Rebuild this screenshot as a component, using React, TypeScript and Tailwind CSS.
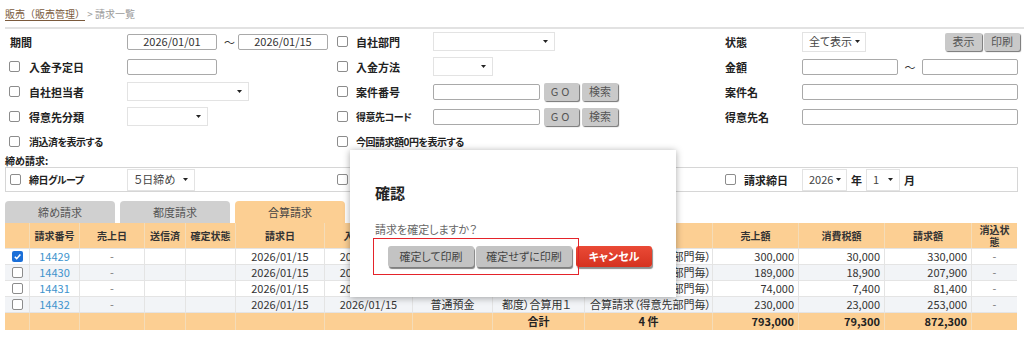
import React from "react";

const rows = [
  { no: "14429", on: true, sales: "300,000", tax: "30,000", total: "330,000" },
  { no: "14430", on: false, sales: "189,000", tax: "18,900", total: "207,900" },
  { no: "14431", on: false, sales: "74,000", tax: "7,400", total: "81,400" },
  { no: "14432", on: false, sales: "230,000", tax: "23,000", total: "253,000" },
];

const grid =
  "grid grid-cols-[25px_50px_65px_41px_50px_89px_88px_80px_92px_128px_86px_86px_87px_45px]";

function Check({ on = false }: { on?: boolean }) {
  if (on) {
    return (
      <span className="flex h-[11px] w-[11px] shrink-0 items-center justify-center rounded-[2px] bg-[#1b6fd8]">
        <svg width="9" height="9" viewBox="0 0 10 10">
          <path d="M2 5.3l2.1 2.1L8.2 2.8" fill="none" stroke="#fff" strokeWidth="1.7" />
        </svg>
      </span>
    );
  }
  return <span className="block h-[11px] w-[11px] shrink-0 rounded-[2px] border border-[#8c8c8c] bg-white" />;
}

function Caret() {
  return (
    <svg width="5" height="3" viewBox="0 0 5 3" className="shrink-0">
      <path d="M0 0h5L2.5 3z" fill="#222" />
    </svg>
  );
}

function Sel({ className, value = "" }: { className: string; value?: string }) {
  return (
    <div className={`flex items-center justify-between gap-[3px] whitespace-nowrap border border-[#e3e3e3] bg-white pl-[6px] pr-[6px] text-[11px] text-[#444] ${className}`}>
      <span>{value}</span>
      <Caret />
    </div>
  );
}

function Input({ className, value = "" }: { className: string; value?: string }) {
  return (
    <div className={`flex h-[16px] items-center justify-center rounded-[2px] border border-[#a9a9a9] bg-white text-[11px] text-[#333] ${className}`}>
      {value}
    </div>
  );
}

function GrayBtn({ className, children }: { className: string; children: React.ReactNode }) {
  return (
    <div className={`flex items-center justify-center rounded-[2px] bg-[#c9c9c9] text-[11px] text-[#555] shadow-[1px_1px_1px_rgba(0,0,0,0.55)] ${className}`}>
      {children}
    </div>
  );
}

function Lbl({ children, small = false }: { children: React.ReactNode; small?: boolean }) {
  return (
    <span className={`whitespace-nowrap font-bold leading-[14px] text-[#222] ${small ? "text-[10px] tracking-[-0.5px]" : "text-[11px]"}`}>
      {children}
    </span>
  );
}

function Tilde() {
  return <span className="text-[11px] leading-[14px] text-[#333]">～</span>;
}

function Cell({ className = "", children }: { className?: string; children?: React.ReactNode }) {
  return (
    <div className={`flex items-center overflow-hidden whitespace-nowrap border-r border-[#e4e4e4] last:border-r-0 ${className}`}>
      {children}
    </div>
  );
}

export default function App() {
  return (
    <div className="relative h-[343px] w-[1024px] overflow-hidden bg-white font-['Noto_Sans_CJK_JP','Noto_Sans',sans-serif] text-[#333] [font-feature-settings:'palt']">
      {/* breadcrumb */}
      <div className="ml-[5px] h-[29px] border-b-2 border-[#e2e2e2] pt-[7px] text-[10px] leading-[14px] [font-feature-settings:normal]">
        <span className="text-[#7b5a3c] underline underline-offset-2">販売（販売管理）</span>
        <span className="text-[#999]"> &gt; 請求一覧</span>
      </div>

      {/* search form */}
      <div className="pl-[5px]">
        <div className="flex h-[25px] items-center">
          <div className="flex w-[332px] items-center">
            <div className="flex w-[122px] items-center pl-[5px]">
              <Lbl>期間</Lbl>
            </div>
            <Input className="w-[90px]" value="2026/01/01" />
            <div className="flex w-[21px] items-center justify-center pl-[4px]">
              <Tilde />
            </div>
            <Input className="w-[90px]" value="2026/01/15" />
          </div>
          <div className="flex w-[388px] items-center">
            <div className="flex w-[96px] items-center gap-[8px]">
              <Check />
              <Lbl>自社部門</Lbl>
            </div>
            <Sel className="h-[19px] w-[122px]" />
          </div>
          <div className="flex flex-1 items-center">
            <div className="flex w-[77px] items-center">
              <Lbl>状態</Lbl>
            </div>
            <Sel className="h-[20px] w-[64px]" value="全て表示" />
            <div className="ml-auto mr-[4px] flex gap-[2px]">
              <GrayBtn className="h-[18px] w-[37px]">表示</GrayBtn>
              <GrayBtn className="h-[18px] w-[36px]">印刷</GrayBtn>
            </div>
          </div>
        </div>

        <div className="flex h-[25px] items-center">
          <div className="flex w-[332px] items-center">
            <div className="flex w-[122px] items-center gap-[9px] pl-[4px]">
              <Check />
              <Lbl>入金予定日</Lbl>
            </div>
            <Input className="w-[90px]" />
          </div>
          <div className="flex w-[388px] items-center">
            <div className="flex w-[96px] items-center gap-[8px]">
              <Check />
              <Lbl>入金方法</Lbl>
            </div>
            <Sel className="h-[19px] w-[60px]" />
          </div>
          <div className="flex flex-1 items-center">
            <div className="flex w-[77px] items-center">
              <Lbl>金額</Lbl>
            </div>
            <Input className="w-[96px]" />
            <div className="flex w-[24px] items-center justify-center">
              <Tilde />
            </div>
            <Input className="w-[96px]" />
          </div>
        </div>

        <div className="flex h-[25px] items-center">
          <div className="flex w-[332px] items-center">
            <div className="flex w-[122px] items-center gap-[9px] pl-[4px]">
              <Check />
              <Lbl>自社担当者</Lbl>
            </div>
            <Sel className="h-[19px] w-[122px]" />
          </div>
          <div className="flex w-[388px] items-center">
            <div className="flex w-[96px] items-center gap-[8px]">
              <Check />
              <Lbl>案件番号</Lbl>
            </div>
            <Input className="w-[107px]" />
            <GrayBtn className="ml-[4px] h-[18px] w-[35px] tracking-[3px]">GO</GrayBtn>
            <GrayBtn className="ml-[3px] h-[18px] w-[36px]">検索</GrayBtn>
          </div>
          <div className="flex flex-1 items-center">
            <div className="flex w-[77px] items-center">
              <Lbl>案件名</Lbl>
            </div>
            <Input className="w-[216px]" />
          </div>
        </div>

        <div className="flex h-[25px] items-center">
          <div className="flex w-[332px] items-center">
            <div className="flex w-[122px] items-center gap-[9px] pl-[4px]">
              <Check />
              <Lbl>得意先分類</Lbl>
            </div>
            <Sel className="h-[19px] w-[81px]" />
          </div>
          <div className="flex w-[388px] items-center">
            <div className="flex w-[96px] items-center gap-[8px]">
              <Check />
              <Lbl small>得意先コード</Lbl>
            </div>
            <Input className="w-[107px]" />
            <GrayBtn className="ml-[4px] h-[18px] w-[35px] tracking-[3px]">GO</GrayBtn>
            <GrayBtn className="ml-[3px] h-[18px] w-[36px]">検索</GrayBtn>
          </div>
          <div className="flex flex-1 items-center">
            <div className="flex w-[77px] items-center">
              <Lbl>得意先名</Lbl>
            </div>
            <Input className="w-[216px]" />
          </div>
        </div>

        <div className="flex h-[25px] items-center">
          <div className="flex w-[332px] items-center gap-[9px] pl-[4px]">
            <Check />
            <Lbl small>消込済を表示する</Lbl>
          </div>
          <div className="flex items-center gap-[8px]">
            <Check />
            <Lbl small>今回請求額0円を表示する</Lbl>
          </div>
        </div>

        <div className="h-[13px] text-[10px] font-bold leading-[13px] text-[#222]">締め請求:</div>

        <div className="flex h-[25px] w-[1013px] items-center border border-[#d6d6d6]">
          <div className="flex w-[331px] items-center">
            <div className="flex w-[121px] items-center gap-[8px] pl-[4px]">
              <Check />
              <Lbl small>締日グループ</Lbl>
            </div>
            <Sel className="h-[22px] w-[68px]" value="５日締め" />
          </div>
          <div className="flex w-[388px] items-center">
            <Check />
          </div>
          <div className="flex items-center">
            <div className="flex w-[77px] items-center gap-[8px]">
              <Check />
              <Lbl>請求締日</Lbl>
            </div>
            <Sel className="h-[22px] w-[45px]" value="2026" />
            <span className="mx-[4px] flex items-center">
              <Lbl>年</Lbl>
            </span>
            <Sel className="h-[22px] w-[34px]" value="1" />
            <span className="ml-[4px] flex items-center">
              <Lbl>月</Lbl>
            </span>
          </div>
        </div>

        {/* tabs */}
        <div className="mt-[9px] flex gap-[5px] text-[11px] text-[#555]">
          <div className="flex h-[22px] w-[110px] items-center justify-center rounded-t-[4px] bg-[#d0d0d0]">締め請求</div>
          <div className="flex h-[22px] w-[110px] items-center justify-center rounded-t-[4px] bg-[#d0d0d0]">都度請求</div>
          <div className="flex h-[22px] w-[110px] items-center justify-center rounded-t-[4px] bg-[#fccf93] text-[#444]">合算請求</div>
        </div>

        {/* table */}
        <div className="w-[1012px] text-[11px]">
          <div className={`${grid} h-[26px] border-b border-[#e4e4e4] bg-[#fccf93] text-[10px] font-bold text-[#333]`}>
            {["", "請求番号", "売上日", "送信済", "確定状態", "請求日", "入金予定日", "", "", "", "売上額", "消費税額", "請求額"].map((h, i) => (
              <div key={i} className="flex items-center justify-center border-r border-[#f4dcb8]">
                {h}
              </div>
            ))}
            <div className="flex items-center justify-center text-center leading-[12px]">
              消込状
              <br />
              態
            </div>
          </div>
          {rows.map((r, i) => (
            <div key={r.no} className={`${grid} h-[16px] border-b border-[#e4e4e4] ${i % 2 ? "bg-[#f2f4f7]" : "bg-white"}`}>
              <Cell className="justify-center">
                <Check on={r.on} />
              </Cell>
              <Cell className="justify-center text-[#3d93cd]">{r.no}</Cell>
              <Cell className="justify-center text-[#777]">-</Cell>
              <Cell />
              <Cell />
              <Cell className="justify-center">2026/01/15</Cell>
              <Cell className="justify-center">2026/01/15</Cell>
              <Cell className="justify-center">{i === 3 ? "普通預金" : ""}</Cell>
              <Cell className="pl-[9px]">{i === 3 ? "都度）合算用１" : ""}</Cell>
              <Cell className="pl-[5px]">合算請求（得意先部門毎）</Cell>
              <Cell className="justify-end pr-[4px]">{r.sales}</Cell>
              <Cell className="justify-end pr-[4px]">{r.tax}</Cell>
              <Cell className="justify-end pr-[4px]">{r.total}</Cell>
              <Cell className="justify-center text-[#777]">-</Cell>
            </div>
          ))}
          <div className={`${grid} h-[17px] bg-[#fccf93] font-bold text-[#222]`}>
            <div className="border-r border-[#f4dcb8]" />
            <div className="border-r border-[#f4dcb8]" />
            <div className="border-r border-[#f4dcb8]" />
            <div className="border-r border-[#f4dcb8]" />
            <div className="border-r border-[#f4dcb8]" />
            <div className="border-r border-[#f4dcb8]" />
            <div className="border-r border-[#f4dcb8]" />
            <div className="border-r border-[#f4dcb8]" />
            <div className="flex items-center justify-center border-r border-[#f4dcb8]">合計</div>
            <div className="flex items-center justify-center border-r border-[#f4dcb8]">4 件</div>
            <div className="flex items-center justify-end border-r border-[#f4dcb8] pr-[4px]">793,000</div>
            <div className="flex items-center justify-end border-r border-[#f4dcb8] pr-[4px]">79,300</div>
            <div className="flex items-center justify-end border-r border-[#f4dcb8] pr-[4px]">872,300</div>
            <div />
          </div>
        </div>
      </div>

      {/* confirm dialog */}
      <div className="absolute left-[350px] top-[150px] h-[147px] w-[326px] bg-white shadow-[0_1px_7px_rgba(0,0,0,0.35)]">
        <div className="pl-[25px] pt-[33px] text-[15px] font-bold leading-[20px] text-[#222]">確認</div>
        <div className="mt-[19px] pl-[25px] text-[11px] leading-[14px] text-[#666]">請求を確定しますか？</div>
        <div className="mt-[10px] flex pl-[38px] text-[11px]">
          <div className="flex h-[21px] w-[86px] items-center justify-center rounded-[3px] bg-[#c3c3c3] text-[#444] shadow-[1px_2px_1px_rgba(0,0,0,0.5)]">確定して印刷</div>
          <div className="ml-[2px] flex h-[21px] w-[96px] items-center justify-center rounded-[3px] bg-[#c3c3c3] text-[#444] shadow-[1px_2px_1px_rgba(0,0,0,0.5)]">確定せずに印刷</div>
          <div className="ml-[4px] flex h-[21px] w-[76px] items-center justify-center rounded-[3px] bg-gradient-to-b from-[#ea4a36] to-[#d5321f] font-bold text-white shadow-[1px_2px_1px_rgba(0,0,0,0.45)]">キャンセル</div>
        </div>
        <div className="absolute left-[23px] top-[88px] h-[37px] w-[206px] border-[1.5px] border-[#e4232a]" />
      </div>
    </div>
  );
}
